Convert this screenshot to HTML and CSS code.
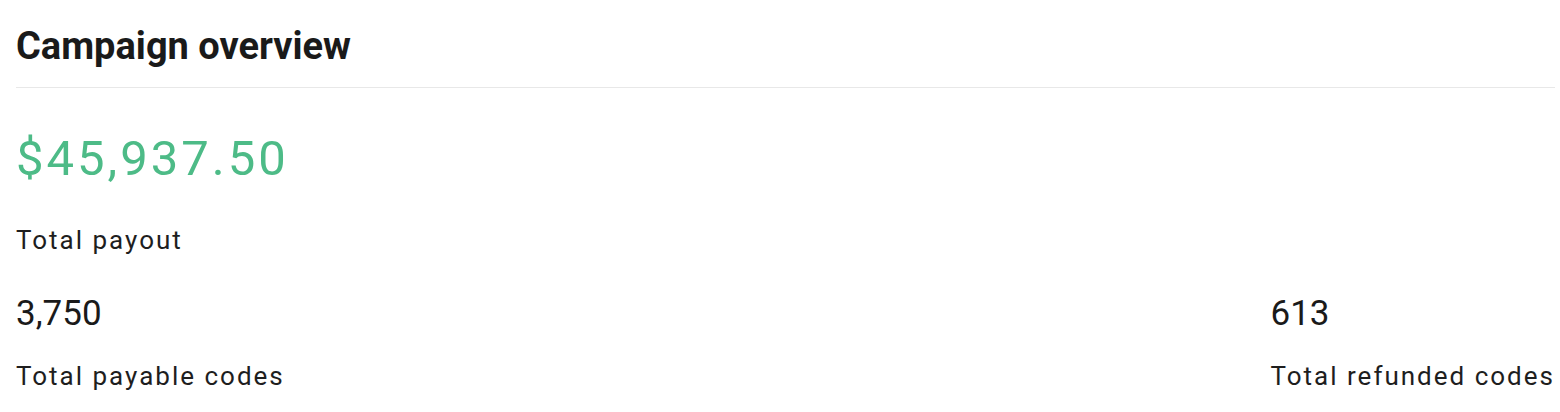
FILE: index.html
```html
<!DOCTYPE html>
<html lang="en">
<head>
<meta charset="utf-8">
<title>Campaign overview</title>
<link rel="stylesheet" href="styles.css">
</head>
<body>
<section class="card">
  <header class="card-header">
    <h2 class="card-title">Campaign overview</h2>
  </header>
  <div class="card-body">
    <div class="total">
      <div class="total-value">$45,937.50</div>
      <div class="label">Total payout</div>
    </div>
    <div class="stats">
      <div class="stat">
        <div class="stat-value">3,750</div>
        <div class="label">Total payable codes</div>
      </div>
      <div class="stat">
        <div class="stat-value">613</div>
        <div class="label">Total refunded codes</div>
      </div>
    </div>
  </div>
</section>
</body>
</html>
```

FILE: styles.css
```css
* { box-sizing: border-box; }
html, body { margin: 0; padding: 0; background: #ffffff; }
body {
  font-family: Roboto, "Liberation Sans", Arial, sans-serif;
  color: #1b1b1b;
  width: 1560px;
  height: 412px;
  overflow: hidden;
}
.card { padding: 0 5px 0 16px; }
.card-header {
  border-bottom: 1px solid #e8e8e8;
  padding: 24px 0 18px;
}
.card-title {
  margin: 0;
  font-size: 38px;
  line-height: 45px;
  font-weight: 700;
  color: #1a1a1a;
}
.card-body { padding-top: 43px; }
.total-value {
  font-size: 49px;
  line-height: 56px;
  letter-spacing: 3px;
  color: #4dbb87;
}
.label {
  font-size: 26px;
  line-height: 32px;
  letter-spacing: 2px;
  color: #1e1e1e;
}
.total .label { margin-top: 37px; }
.stats {
  display: flex;
  justify-content: space-between;
  margin-top: 38px;
}
.stat-value {
  font-size: 35px;
  line-height: 40px;
  color: #1a1a1a;
}
.stat .label { margin-top: 26px; }
```
